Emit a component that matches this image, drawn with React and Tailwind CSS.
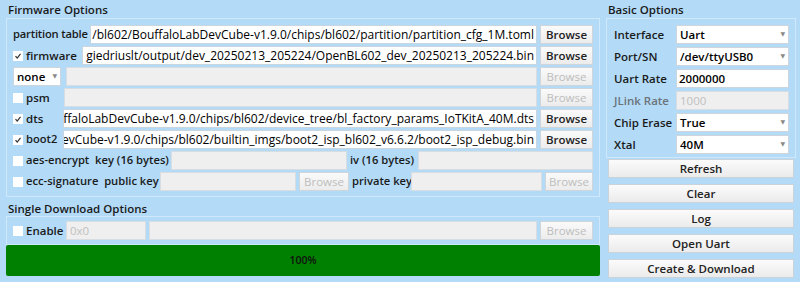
import React from 'react';

const font = { fontFamily: '"Open Sans", "DejaVu Sans", sans-serif' };

function Check({ checked }) {
  return (
    <span className="flex h-[10px] w-[10px] shrink-0 items-center justify-center bg-white">
      {checked && (
        <svg width="8" height="8" viewBox="0 0 8 8">
          <path d="M1.5 4.2 L3.2 6 L6.5 1.8" fill="none" stroke="#333" strokeWidth="1.2" />
        </svg>
      )}
    </span>
  );
}

function PathField({ value, className = '' }) {
  return (
    <div className={`flex h-full min-w-0 items-center justify-end overflow-hidden whitespace-nowrap border border-[#c9d6df] bg-white pr-[2px] text-[12px] font-medium text-black ${className}`}>
      {value}
    </div>
  );
}

function Disabled({ className = '', text = '' }) {
  return (
    <div className={`flex h-full items-center border border-[#d8dde1] bg-[#efefef] px-[3px] text-[11.5px] text-[#c0c0c0] ${className}`}>
      {text}
    </div>
  );
}

function Browse({ disabled, className = '' }) {
  return (
    <div
      className={`flex h-full w-[53px] shrink-0 items-center justify-center border border-[#cfd6db] bg-gradient-to-b from-[#fafafa] to-[#ececec] text-[11.5px] ${
        disabled ? 'text-[#bdbdbd]' : 'font-semibold text-[#222]'
      } ${className}`}
    >
      Browse
    </div>
  );
}

function Combo({ value, className = '' }) {
  return (
    <div className={`flex h-full items-center justify-between border border-[#cfd6db] bg-white px-[3px] text-[11.5px] font-semibold text-black ${className}`}>
      <span>{value}</span>
      <span className="text-[6px] text-[#888]">▼</span>
    </div>
  );
}

function SideButton({ children }) {
  return (
    <div className="flex h-[19px] items-center justify-center border border-[#c9d3d9] bg-gradient-to-b from-[#fbfbfb] to-[#ebebeb] text-[11.5px] font-semibold text-[#222]">
      {children}
    </div>
  );
}

function Row({ children }) {
  return <div className="flex h-[19px] items-center gap-[3px]">{children}</div>;
}

function Label({ children, className = '' }) {
  return <span className={`shrink-0 whitespace-nowrap text-[11.5px] font-semibold text-[#1a1a1a] ${className}`}>{children}</span>;
}

export default function App() {
  return (
    <div style={font} className="flex h-[282px] w-[800px] gap-[6px] overflow-hidden bg-[#b3dbf8] pl-[6px] pr-[4px]">
      {/* left column */}
      <div className="flex w-[594px] flex-col">
        <div className="pl-[2px] pt-[2px] text-[11.5px] font-semibold leading-[15px] text-[#1a1a1a]">Firmware Options</div>
        <div className="mt-[1px] flex flex-col gap-[2px] border border-[#cfe8fb] px-[6px] pb-[5px] pt-[6px]">
          <Row>
            <Label className="w-[74px] !text-[11.2px] tracking-[-0.2px]">partition table</Label>
            <PathField className="flex-1" value="/bl602/BouffaloLabDevCube-v1.9.0/chips/bl602/partition/partition_cfg_1M.toml" />
            <Browse />
          </Row>
          <Row>
            <Check checked />
            <Label className="w-[53px]">firmware</Label>
            <PathField className="flex-1" value="giedriuslt/output/dev_20250213_205224/OpenBL602_dev_20250213_205224.bin" />
            <Browse />
          </Row>
          <Row>
            <Combo value="none" className="w-[48px] font-semibold" />
            <Disabled className="ml-[2px] flex-1" />
            <Browse disabled />
          </Row>
          <Row>
            <Check />
            <Label className="w-[35px]">psm</Label>
            <Disabled className="flex-1" />
            <Browse disabled />
          </Row>
          <Row>
            <Check checked />
            <Label className="w-[34px]">dts</Label>
            <PathField className="flex-1" value="ffaloLabDevCube-v1.9.0/chips/bl602/device_tree/bl_factory_params_IoTKitA_40M.dts" />
            <Browse />
          </Row>
          <Row>
            <Check checked />
            <Label className="w-[35px] !text-[11.2px]">boot2</Label>
            <PathField className="ml-[-1px] flex-1" value="evCube-v1.9.0/chips/bl602/builtin_imgs/boot2_isp_bl602_v6.6.2/boot2_isp_debug.bin" />
            <Browse />
          </Row>
          <Row>
            <Check />
            <Label className="w-[142px] !text-[11.2px]">aes-encrypt&nbsp; key (16 bytes)</Label>
            <Disabled className="w-[176px]" />
            <Label className="w-[65px] !text-[11.2px]">iv (16 bytes)</Label>
            <Disabled className="flex-1" />
          </Row>
          <Row>
            <Check />
            <Label className="w-[131px] !text-[11.2px]">ecc-signature&nbsp; public key</Label>
            <Disabled className="w-[136px]" />
            <Browse disabled className="!w-[50px]" />
            <Label className="w-[56px] !text-[11.2px]">private key</Label>
            <Disabled className="flex-1" />
            <Browse disabled className="!w-[48px]" />
          </Row>
        </div>

        <div className="mt-[4px] pl-[2px] text-[11.5px] font-semibold leading-[15px] text-[#1a1a1a]">Single Download Options</div>
        <div className="flex flex-col border border-[#cfe8fb] px-[6px] py-[4px]">
          <Row>
            <Check />
            <Label className="w-[37px]">Enable</Label>
            <Disabled className="w-[80px]" text="0x0" />
            <Disabled className="flex-1" />
            <Browse disabled />
          </Row>
        </div>

        <div className="flex h-[31px] items-center justify-center rounded-[2px] bg-[#008000] text-[10.5px] font-semibold text-[#111]">
          100%
        </div>
      </div>

      {/* right column */}
      <div className="flex flex-1 flex-col">
        <div className="pl-[2px] pt-[2px] text-[11.5px] font-semibold leading-[15px] text-[#1a1a1a]">Basic Options</div>
        <div className="mt-[1px] flex flex-col gap-[3px] border border-[#cfe8fb] px-[6px] pb-[3px] pt-[6px]">
          {[
            ['Interface', <Combo key="a" value="Uart" className="flex-1" />],
            ['Port/SN', <Combo key="b" value="/dev/ttyUSB0" className="flex-1" />],
            ['Uart Rate', <PathField key="c" value="2000000" className="flex-1 !justify-start pl-[2px] !text-[11.5px] font-semibold" />],
            ['JLink Rate', <Disabled key="d" className="flex-1" text="1000" />],
            ['Chip Erase', <Combo key="e" value="True" className="flex-1" />],
            ['Xtal', <Combo key="f" value="40M" className="flex-1" />],
          ].map(([label, field], i) => (
            <div key={label} className="flex h-[19px] items-center">
              <Label className={`w-[63px] pl-[1px] ${i === 3 ? 'text-[#6b7378]' : ''}`}>{label}</Label>
              {field}
            </div>
          ))}
        </div>
        <div className="mt-[1px] flex flex-col gap-[6px] px-[2px]">
          <SideButton>Refresh</SideButton>
          <SideButton>Clear</SideButton>
          <SideButton>Log</SideButton>
          <SideButton>Open Uart</SideButton>
          <SideButton>Create &amp; Download</SideButton>
        </div>
      </div>
    </div>
  );
}
